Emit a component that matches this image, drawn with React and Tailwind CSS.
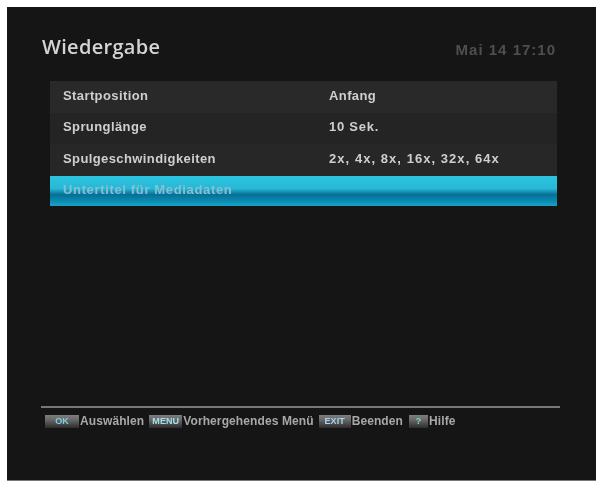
const rows = [
  { label: "Startposition", value: "Anfang", bg: "bg-[#292929]", spacing: "tracking-[0.4px]" },
  { label: "Sprunglänge", value: "10 Sek.", bg: "bg-[#242424]", spacing: "tracking-[0.75px]" },
  { label: "Spulgeschwindigkeiten", value: "2x, 4x, 8x, 16x, 32x, 64x", bg: "bg-[#272727]", spacing: "tracking-[1.05px]" },
];

const hints = [
  { key: "OK", label: "Auswählen", keyWidth: "w-[34px]", keyText: "text-[#7fd0dc]", gap: "mr-[5px]" },
  { key: "MENU", label: "Vorhergehendes Menü", keyWidth: "w-[33px]", keyText: "text-[#a5e0ea]", gap: "mr-[5px]" },
  { key: "EXIT", label: "Beenden", keyWidth: "w-[32px]", keyText: "text-[#a5d4ee]", gap: "mr-[6px]" },
  { key: "?", label: "Hilfe", keyWidth: "w-[19px]", keyText: "text-[#7fd8c8]", gap: "" },
];

export default function App() {
  return (
    <div className="w-[601px] h-[482px] bg-white pt-[7px] pl-[7px] overflow-hidden font-['Liberation_Sans',sans-serif]">
      <div className="w-[589px] h-[474px] bg-[#151515] border-b border-[#777] flex flex-col">
        <div className="blur-[0.7px] flex flex-col h-full">
          <div className="flex justify-between items-center pl-[35px] pr-[40px] h-[74px] pt-[6px]">
            <h1 className="text-[20px] font-semibold tracking-[0.3px] text-[#d4d4d4] font-['Open_Sans',sans-serif]">Wiedergabe</h1>
            <span className="text-[15px] font-bold tracking-[1px] text-[#4f4f4f] mt-[6px]">Mai 14 17:10</span>
          </div>

          <div className="ml-[43px] w-[507px]">
            {rows.map((row) => (
              <div key={row.label} className={`flex items-center h-[31.5px] pl-[13px] pb-[3px] text-[13px] font-bold text-[#cfcfcf] ${row.bg}`}>
                <span className="w-[266px] tracking-[0.4px]">{row.label}</span>
                <span className={row.spacing}>{row.value}</span>
              </div>
            ))}
            <div className="flex items-center h-[30px] pl-[13px] pb-[2px] text-[13px] font-bold tracking-[0.65px] text-[#86c0d2] bg-[linear-gradient(to_bottom,#2cc4e0_0%,#27b8d6_42%,#066f96_62%,#0a86ac_80%,#16a4c8_100%)]">
              Untertitel für Mediadaten
            </div>
          </div>

          <div className="mt-auto mb-[50px] ml-[34px] w-[519px] border-t-2 border-[#777] pt-[4px] pl-[4px] flex items-center text-[12px] font-bold tracking-[0.1px] text-[#a8a8a8]">
            {hints.map((hint) => (
              <div key={hint.key} className={`flex items-center ${hint.gap}`}>
                <span className={`h-[13px] mr-[1px] bg-[linear-gradient(to_bottom,#7d7d7d_0%,#6a6a6a_35%,#2c2c2c_100%)] text-[9px] leading-[13px] text-center ${hint.keyWidth} ${hint.keyText}`}>
                  {hint.key}
                </span>
                <span>{hint.label}</span>
              </div>
            ))}
          </div>
        </div>
      </div>
    </div>
  );
}
